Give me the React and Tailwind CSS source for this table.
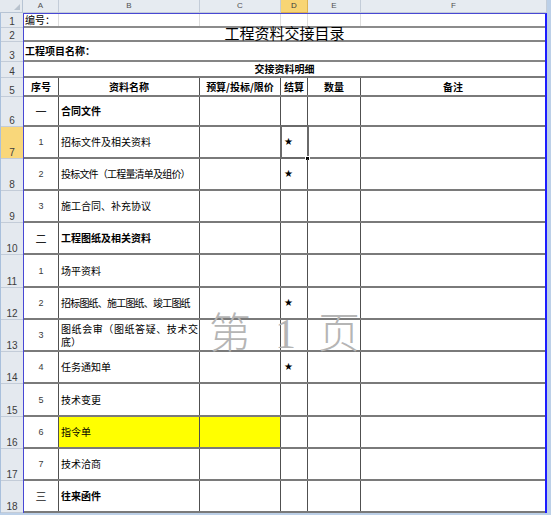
import React from "react";
import clsx from "clsx";

const cols = [
  { key: "A", w: "w-[36px]" },
  { key: "B", w: "w-[141px]" },
  { key: "C", w: "w-[81px]" },
  { key: "D", w: "w-[27px]", active: true },
  { key: "E", w: "w-[53px]" },
  { key: "F", w: "w-[186px]" },
];

// rows 6-18 of the sheet
const rows = [
  { n: 6, h: "h-[30px]", a: "一", b: "合同文件", bold: true },
  { n: 7, h: "h-[32px]", a: "1", b: "招标文件及相关资料", star: true, selected: true },
  { n: 8, h: "h-[32px]", a: "2", b: "投标文件（工程量清单及组价）", star: true, tight: true },
  { n: 9, h: "h-[32px]", a: "3", b: "施工合同、补充协议" },
  { n: 10, h: "h-[32px]", a: "二", b: "工程图纸及相关资料", bold: true },
  { n: 11, h: "h-[33px]", a: "1", b: "场平资料" },
  { n: 12, h: "h-[32px]", a: "2", b: "招标图纸、施工图纸、竣工图纸", star: true, tight: true },
  { n: 13, h: "h-[32px]", a: "3", b: "图纸会审（图纸答疑、技术交底）", wrap: true },
  { n: 14, h: "h-[32px]", a: "4", b: "任务通知单", star: true },
  { n: 15, h: "h-[33px]", a: "5", b: "技术变更" },
  { n: 16, h: "h-[32px]", a: "6", b: "指令单", yellow: true },
  { n: 17, h: "h-[32px]", a: "7", b: "技术洽商" },
  { n: 18, h: "h-[32px]", a: "三", b: "往来函件", bold: true },
];

const rowHeads = [
  { n: 1, h: "h-[15px]" },
  { n: 2, h: "h-[14px]" },
  { n: 3, h: "h-[20px]" },
  { n: 4, h: "h-[16px]" },
  { n: 5, h: "h-[19px]" },
  ...rows.map((r) => ({ n: r.n, h: r.h, active: r.selected })),
];

const ColumnHeader = () => (
  <div className="flex h-[13px] w-[547px]">
    <div className="relative w-[23px] h-full bg-[#e4e9ef] border-r border-b border-[#b7c4d4]">
      <svg className="absolute right-[2px] bottom-[2px]" width="6" height="6">
        <path d="M6 0V6H0Z" fill="#b9c3ce" />
      </svg>
    </div>
    {cols.map((c) => (
      <div
        key={c.key}
        className={clsx(
          c.w,
          "h-full flex items-center justify-center border-r border-b font-['Liberation_Sans',sans-serif] text-[8px] leading-none",
          c.active
            ? "bg-[#f8d574] border-[#dcb250] text-[#3a3a3a]"
            : "bg-[#e6ebf1] border-[#c3ccd8] text-[#505050]"
        )}
      >
        {c.key}
      </div>
    ))}
  </div>
);

const RowHeaders = () => (
  <div className="w-[23px] border-l border-[#a9c0dc] flex flex-col">
    {rowHeads.map((r) => (
      <div
        key={r.n}
        className={clsx(
          r.h,
          "flex items-end justify-center border-b border-[#c3ccd8] font-['Liberation_Sans',sans-serif] text-[10px] leading-[11px] text-[#3c3c3c]",
          r.active ? "bg-[#f9d77a]" : "bg-[#e4e9ef]"
        )}
      >
        {r.n}
      </div>
    ))}
  </div>
);

const Sheet = () => (
  <div className="w-[524px] bg-white border-l border-t border-r-2 border-[#4848d4] border-r-[#1c1cff]">
    {/* row 1 */}
    <div className="grid grid-cols-[35px_141px_81px_27px_53px_184px] h-[14px] border-b-2 border-[#8c8c8c]">
      <div className="border-r border-[#dedede] pl-[1px] flex items-center whitespace-nowrap leading-none">
        编号：
      </div>
      <div className="border-r border-[#dedede]" />
      <div className="border-r border-[#dedede]" />
      <div className="border-r border-[#dedede]" />
      <div className="border-r border-[#dedede]" />
      <div />
    </div>
    {/* row 2 */}
    <div className="h-[14px] border-b-2 border-[#858585] flex items-end justify-center">
      <span className="text-[15px] leading-[14px] whitespace-nowrap">工程资料交接目录</span>
    </div>
    {/* row 3 */}
    <div className="h-[20px] border-b-2 border-[#858585] flex items-center pl-[1px] font-bold whitespace-nowrap">
      工程项目名称：
    </div>
    {/* row 4 */}
    <div className="h-[16px] border-b-2 border-[#7a7a7a] flex items-center justify-center font-bold whitespace-nowrap">
      交接资料明细
    </div>
    {/* row 5 */}
    <div className="grid grid-cols-[35px_141px_81px_27px_53px_184px] h-[19px] border-b-2 border-[#7a7a7a] font-bold whitespace-nowrap">
      <div className="border-r border-[#505050] flex items-center justify-center">序号</div>
      <div className="border-r border-[#505050] flex items-center justify-center">资料名称</div>
      <div className="border-r border-[#505050] flex items-center justify-center">预算/投标/限价</div>
      <div className="border-r border-[#505050] flex items-center justify-center">结算</div>
      <div className="border-r border-[#505050] flex items-center justify-center">数量</div>
      <div className="flex items-center justify-center">备注</div>
    </div>
    {rows.map((r) => (
      <div
        key={r.n}
        className={clsx(r.h, "grid grid-cols-[35px_141px_81px_27px_53px_184px] border-b-2 border-[#7a7a7a]")}
      >
        <div
          className={clsx(
            "border-r border-[#505050] flex items-center justify-center",
            /[0-9]/.test(r.a)
              ? "font-['Liberation_Sans',sans-serif] text-[9px] text-[#3a3a3a]"
              : "text-[11px] text-[#222]"
          )}
        >
          {r.a}
        </div>
        <div
          className={clsx(
            "border-r border-[#505050] flex items-center pl-[2px]",
            r.bold && "font-bold",
            r.yellow && "bg-[#ffff00]",
            r.tight && "tracking-[-0.8px]",
            r.wrap ? "text-justify leading-[13px] pr-[1px]" : "whitespace-nowrap"
          )}
        >
          {r.wrap ? <p className="w-full text-justify">{r.b}</p> : r.b}
        </div>
        <div className={clsx("border-r border-[#505050]", r.yellow && "bg-[#ffff00]")} />
        <div className="relative border-r border-[#505050] flex items-center pl-[3px] font-['DejaVu_Sans',sans-serif] text-[10px]">
          {r.star && "★"}
          {r.selected && (
            <>
              <div className="absolute left-[-1px] top-[-2px] w-[29px] h-[34px] border-2 border-[#6a6a6a]" />
              <div className="absolute right-[-3px] bottom-[-4px] w-[5px] h-[5px] bg-black border border-white" />
            </>
          )}
        </div>
        <div className="border-r border-[#505050]" />
        <div />
      </div>
    ))}
  </div>
);

const Watermark = () => (
  <div className="absolute left-[209px] top-[309px] flex items-baseline text-[42px] leading-[42px] font-light text-[#b5b5b5] pointer-events-none">
    <span>第</span>
    <span className="ml-[24px] font-['Liberation_Serif',serif] font-normal">1</span>
    <span className="ml-[22px]">页</span>
  </div>
);

export default function App() {
  return (
    <div className="relative w-[551px] h-[515px] overflow-hidden bg-[#bcd0e8] font-['Noto_Sans_CJK_SC',sans-serif] text-[10px] leading-[12px] text-black">
      <ColumnHeader />
      <div className="flex">
        <RowHeaders />
        <Sheet />
      </div>
      <Watermark />
    </div>
  );
}
